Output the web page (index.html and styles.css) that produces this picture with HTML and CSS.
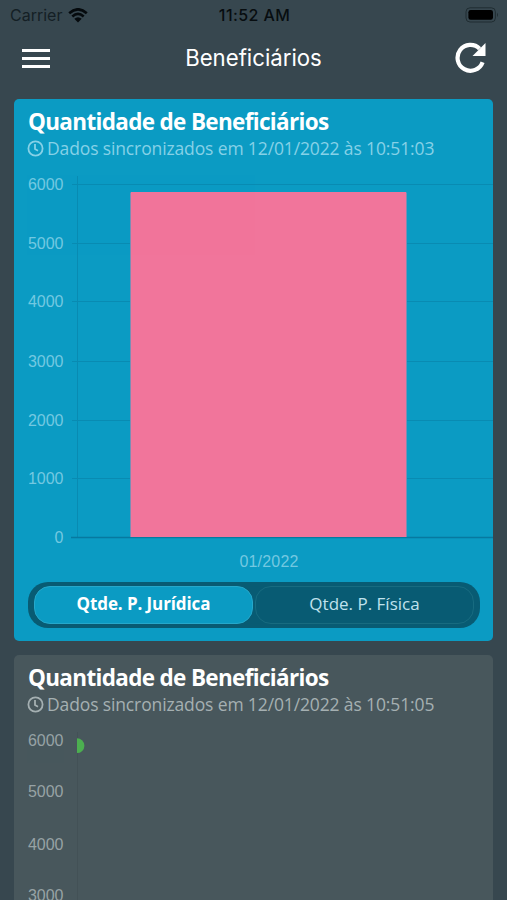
FILE: index.html
```
<!DOCTYPE html>
<html lang="pt-BR">
<head>
    <meta charset="UTF-8">
    <meta name="viewport" content="width=device-width, initial-scale=1.0">
    <title>Beneficiários</title>
    <link rel="stylesheet" href="styles.css">
</head>
<body>
    <div class="status-bar">
        <div class="carrier">
            <span>Carrier</span>
            <svg class="wifi" width="20" height="15" viewBox="0 0 20 15">
                <path d="M1.2 5.2Q10-2.6 18.8 5.2M4.3 8.4Q10 3.4 15.7 8.4" fill="none" stroke="#050a0d" stroke-width="2.6"/>
                <path d="M6.3 10.8Q10 7.8 13.7 10.8L10 14.6Z" fill="#050a0d"/>
            </svg>
        </div>
        <span class="time">11:52 AM</span>
        <svg class="battery" width="34" height="16" viewBox="0 0 34 16">
            <rect x="1" y=".8" width="29.4" height="14.2" rx="4" fill="none" stroke="#202d32"/>
            <rect x="3.4" y="3" width="24.6" height="9.8" rx="2.2" fill="#000"/>
            <path d="M32 5.8Q34 7.9 32 10Z" fill="#202d32"/>
        </svg>
    </div>

    <header class="navbar">
        <button class="menu" aria-label="Menu"><i></i><i></i><i></i></button>
        <h1>Beneficiários</h1>
        <button class="refresh" aria-label="Atualizar">
            <svg width="32" height="32" viewBox="0 0 32 32">
                <path d="M27.6 20.2A12.9 12.9 0 1 1 24.6 6.7" fill="none" stroke="#fff" stroke-width="4.2"/>
                <path d="M30.5 1V14H17.5Z" fill="#fff"/>
            </svg>
        </button>
    </header>

    <main>
        <section class="card card-blue">
            <h2>Quantidade de Beneficiários</h2>
            <p class="sync">
                <svg width="17" height="17" viewBox="0 0 17 17"><circle cx="8.5" cy="8.5" r="7.1"/><path d="M8 4V9L11 10.8"/></svg>
                <span>Dados sincronizados em 12/01/2022 às 10:51:03</span>
            </p>
            <svg class="chart" width="479" height="408" viewBox="0 0 479 408">
                <g class="grid">
                    <path d="M58 18.5H479M58 77.5H479M58 135.5H479M58 195.5H479M58 254.5H479M58 312.5H479M63.5 10V372"/>
                    <path class="zero" d="M57 371.5H479"/>
                </g>
                <rect x="117" y="26" width="275" height="345" fill="#f1759b"/>
                <path d="M116.5 371V26.5M392.5 371V26.5" stroke="#7d8cb3"/>
                <g class="labels">
                    <text x="49.5" y="23.5">6000</text>
                    <text x="49.5" y="83">5000</text>
                    <text x="49.5" y="141">4000</text>
                    <text x="49.5" y="200.5">3000</text>
                    <text x="49.5" y="259.5">2000</text>
                    <text x="49.5" y="317.5">1000</text>
                    <text x="49.5" y="377">0</text>
                    <text class="month" x="255" y="401">01/2022</text>
                </g>
            </svg>
            <div class="tabs">
                <button class="tab active"><span>Qtde. P. Jurídica</span></button>
                <button class="tab"><span>Qtde. P. Física</span></button>
            </div>
        </section>

        <section class="card card-gray">
            <h2>Quantidade de Beneficiários</h2>
            <p class="sync">
                <svg width="17" height="17" viewBox="0 0 17 17"><circle cx="8.5" cy="8.5" r="7.1"/><path d="M8 4V9L11 10.8"/></svg>
                <span>Dados sincronizados em 12/01/2022 às 10:51:05</span>
            </p>
            <svg class="chart" width="479" height="408" viewBox="0 0 479 408">
                <path d="M63.5 10V408" stroke="#435156"/>
                <path d="M63 16.3A7.4 7.4 0 0 1 63 31.1Z" fill="#4caf50"/>
                <g class="labels">
                    <text x="49.5" y="24">6000</text>
                    <text x="49.5" y="75">5000</text>
                    <text x="49.5" y="127.5">4000</text>
                    <text x="49.5" y="178.5">3000</text>
                </g>
            </svg>
        </section>
    </main>
</body>
</html>
```
FILE: styles.css
```
* {
    box-sizing: border-box;
}
body {
    margin: 0;
    height: 900px;
    overflow: hidden;
    background-color: #37474f;
    font-family: "Open Sans", "Noto Sans", sans-serif;
}
button {
    border: 0;
    padding: 0;
    background: none;
    font: inherit;
}
.status-bar {
    display: grid;
    grid-template-columns: 1fr auto 1fr;
    align-items: center;
    height: 30px;
    padding: 0 8px 0 10px;
    color: #141f25;
    font: 16px Inter, sans-serif;
}
.carrier {
    display: flex;
    align-items: center;
    gap: 6px;
}
.time {
    color: #070d10;
    font-weight: 500;
    letter-spacing: 0.4px;
}
.battery {
    justify-self: end;
}
.navbar {
    display: flex;
    align-items: center;
    justify-content: space-between;
    height: 56px;
    padding: 0 20px 0 22px;
}
.navbar h1 {
    margin: 0;
    padding: 0 0 1px 2px;
    color: #fff;
    font: 22.2px Inter, sans-serif;
}
.menu {
    display: flex;
    flex-direction: column;
    gap: 5px;
    width: 28px;
}
.menu i {
    height: 3px;
    background-color: #fff;
}
.refresh,
.refresh svg {
    display: block;
}
main {
    display: flex;
    flex-direction: column;
    gap: 14px;
    height: 814px;
    padding: 13px 14px 0;
    overflow: hidden;
}
.card {
    flex: none;
    height: 542px;
    padding-top: 8px;
    border-radius: 5px;
    overflow: hidden;
}
.card-blue {
    background-color: #0b9bc3;
    color: #86d1e7;
}
.card-gray {
    background-color: #48575c;
    color: #a5b0b2;
}
.card h2 {
    margin: 0 0 0 14px;
    color: #fff;
    font-size: 22.5px;
    font-weight: 700;
    letter-spacing: -0.67px;
    line-height: 30px;
}
.sync {
    display: flex;
    align-items: center;
    gap: 3px;
    height: 23px;
    margin: 0 0 0 13px;
    font-size: 17.5px;
    letter-spacing: -0.13px;
    white-space: nowrap;
}
.sync span {
    padding-bottom: 1px;
}
.sync svg {
    fill: none;
    stroke: currentColor;
    stroke-width: 1.8;
}
.chart {
    display: block;
    margin-top: 6px;
}
.grid path {
    fill: none;
    stroke: #098bb2;
}
.grid .zero {
    stroke: #0779a0;
    stroke-width: 1.5;
}
.labels {
    fill: currentColor;
    font: 16px "Liberation Sans", Arial, sans-serif;
    text-anchor: end;
    opacity: 0.85;
}
.labels .month {
    text-anchor: middle;
    letter-spacing: 0.2px;
}
.tabs {
    display: grid;
    grid-template-columns: 1fr 1fr;
    gap: 2px;
    width: 452px;
    height: 46px;
    margin: 8px 0 0 14px;
    padding: 4px 6px;
    border-radius: 20px;
    background-color: #085b73;
}
.tab {
    padding-bottom: 3px;
    border: 1px solid #176b80;
    border-radius: 16px;
    color: #c0e2ed;
    font-size: 17px;
    font-weight: 500;
}
.tab.active {
    border-color: #25a8cb;
    background-color: #0b9bc3;
    color: #fff;
    font-weight: 700;
    letter-spacing: -0.1px;
}
```
